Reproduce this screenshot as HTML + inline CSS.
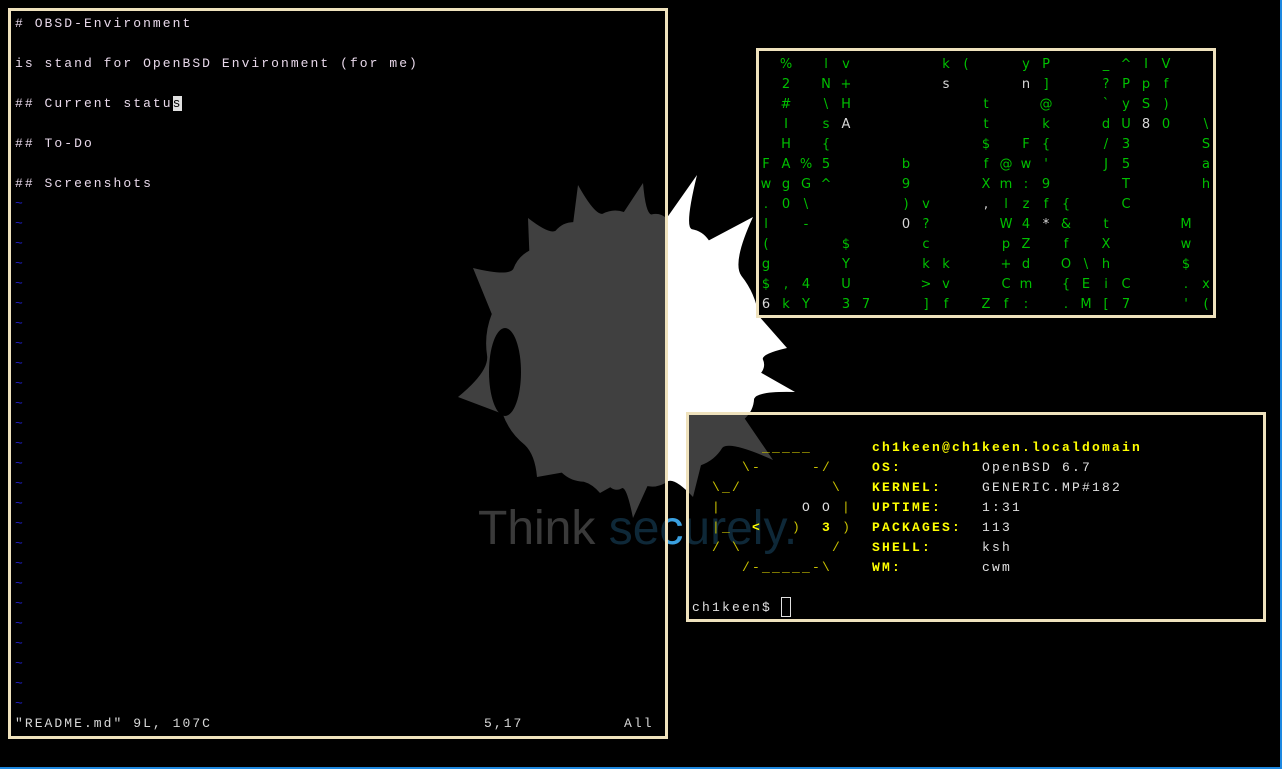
<!DOCTYPE html>
<html><head><meta charset="utf-8"><style>
*{margin:0;padding:0;box-sizing:border-box}
html,body{width:1282px;height:769px;overflow:hidden;background:#000}
body{position:relative;font-family:"Liberation Mono","DejaVu Sans Mono",monospace}
.win{position:absolute;border:3px solid #efe2bd;background:rgba(0,0,0,0.75)}
.t{position:absolute;white-space:pre;font-size:13px;letter-spacing:2.05px;line-height:20px}
#bg{position:absolute;left:0;top:0}
.m{position:absolute;color:#00c000;font-family:"DejaVu Sans",sans-serif;font-size:13px;width:20px;text-align:center;line-height:20px}
.w{color:#d8d8d8}
</style></head><body>
<svg id="bg" width="1282" height="769">
<path id="blob" fill="#fff" d=""/>
<ellipse cx="505" cy="372" rx="16" ry="44" fill="#000"/>
<text x="478" y="544" font-family="Liberation Sans,sans-serif" font-size="48" fill="#e8e8e8">Think <tspan fill="#3aa0e0">securely.</tspan></text>
<rect x="0" y="767" width="1282" height="2" fill="#1e88e0"/>
<rect x="1280" y="0" width="2" height="769" fill="#1e88e0"/>
</svg>
<script>
(function(){var cx=625,cy=350,R=138;
var tips=[[697,175],[753,217],[787,348],[795,392],[773,460],[693,497],[633,518],[600,493],[537,477],[458,397],[473,268],[528,218],[578,185],[643,183]];
var pts=tips.map(function(p){return {a:Math.atan2(p[1]-cy,p[0]-cx),p:p}}).sort(function(a,b){return a.a-b.a});
var d="";for(var i=0;i<pts.length;i++){var a=pts[i],b=pts[(i+1)%pts.length];var a1=a.a,a2=b.a;if(a2<a1)a2+=2*Math.PI;
d+=(i?"L":"M")+a.p[0]+" "+a.p[1];var m1=a1+(a2-a1)*0.3,m2=a1+(a2-a1)*0.7,mm=a1+(a2-a1)*0.5;
d+="Q"+(cx+R*Math.cos(a1+(a2-a1)*0.15))+" "+(cy+R*Math.sin(a1+(a2-a1)*0.15))+" "+(cx+R*Math.cos(m1))+" "+(cy+R*Math.sin(m1));
d+="Q"+(cx+R*1.03*Math.cos(mm))+" "+(cy+R*1.03*Math.sin(mm))+" "+(cx+R*Math.cos(m2))+" "+(cy+R*Math.sin(m2));}
d+="Z";document.getElementById("blob").setAttribute("d",d);})();
</script>

<div class="win" style="left:8px;top:8px;width:660px;height:731px;"></div>
<div class="t" style="left:15px;top:14px;color:#e8d8ea"># OBSD-Environment

is stand for OpenBSD Environment (for me)

## Current statu<span style="background:#e0e0e0;color:#000">s</span>

## To-Do

## Screenshots</div>
<div class="t" style="left:15px;top:194px;color:#2020d0;line-height:20px">~
~
~
~
~
~
~
~
~
~
~
~
~
~
~
~
~
~
~
~
~
~
~
~
~
~</div>
<div class="t" style="left:15px;top:714px;color:#d8d8d8">"README.md" 9L, 107C</div>
<div class="t" style="left:484px;top:714px;color:#d8d8d8">5,17</div>
<div class="t" style="left:624px;top:714px;color:#d8d8d8">All</div>

<div class="win" style="left:756px;top:48px;width:460px;height:270px;background:#000"></div>
<div id="mx"></div>
<script>
(function(){var rows=[
[[1,'%'],[3,'l'],[4,'v'],[9,'k'],[10,'('],[13,'y'],[14,'P'],[17,'_'],[18,'^'],[19,'I'],[20,'V']],
[[1,'2'],[3,'N'],[4,'+'],[9,'s',1],[13,'n',1],[14,']'],[17,'?'],[18,'P'],[19,'p'],[20,'f']],
[[1,'#'],[3,'\\'],[4,'H'],[11,'t'],[14,'@'],[17,'`'],[18,'y'],[19,'S'],[20,')']],
[[1,'I'],[3,'s'],[4,'A',1],[11,'t'],[14,'k'],[17,'d'],[18,'U'],[19,'8',1],[20,'0'],[22,'\\']],
[[1,'H'],[3,'{'],[11,'$'],[13,'F'],[14,'{'],[17,'/'],[18,'3'],[22,'S']],
[[0,'F'],[1,'A'],[2,'%'],[3,'5'],[7,'b'],[11,'f'],[12,'@'],[13,'w'],[14,"'"],[17,'J'],[18,'5'],[22,'a']],
[[0,'w'],[1,'g'],[2,'G'],[3,'^'],[7,'9'],[11,'X'],[12,'m'],[13,':'],[14,'9'],[18,'T'],[22,'h']],
[[0,'.'],[1,'0'],[2,'\\'],[7,')'],[8,'v'],[11,',',1],[12,'l'],[13,'z'],[14,'f'],[15,'{'],[18,'C']],
[[0,'l'],[2,'-'],[7,'0',1],[8,'?'],[12,'W'],[13,'4'],[14,'*',1],[15,'&'],[17,'t'],[21,'M']],
[[0,'('],[4,'$'],[8,'c'],[12,'p'],[13,'Z'],[15,'f'],[17,'X'],[21,'w']],
[[0,'g'],[4,'Y'],[8,'k'],[9,'k'],[12,'+'],[13,'d'],[15,'O'],[16,'\\'],[17,'h'],[21,'$']],
[[0,'$'],[1,','],[2,'4'],[4,'U'],[8,'>'],[9,'v'],[12,'C'],[13,'m'],[15,'{'],[16,'E'],[17,'i'],[18,'C'],[21,'.'],[22,'x']],
[[0,'6',1],[1,'k'],[2,'Y'],[4,'3'],[5,'7'],[8,']'],[9,'f'],[11,'Z'],[12,'f'],[13,':'],[15,'.'],[16,'M'],[17,'['],[18,'7'],[21,"'"],[22,'(']]];
var h="";rows.forEach(function(r,i){r.forEach(function(c){h+='<div class="m'+(c[2]?' w':'')+'" style="left:'+(756+20*c[0])+'px;top:'+(55+20*i)+'px">'+c[1].replace('&','&amp;').replace('<','&lt;').replace('>','&gt;')+'</div>';});});
document.getElementById('mx').innerHTML=h;})();
</script>

<div class="win" style="left:686px;top:412px;width:580px;height:210px;"></div>
<div class="t" style="left:692px;top:438px;color:#c8c000;letter-spacing:2.2px">       _____
     \-     -/
  \_/         \
  |        <span style="color:#e0e0e0">O O</span> |
  |_  <b style="color:#ffff00">&lt;</b>   )  <b style="color:#ffff00">3</b> )
  / \         /
     /-_____-\</div>
<div class="t" style="left:872px;top:438px;color:#ffff00;font-weight:bold;letter-spacing:2.2px">ch1keen@ch1keen.localdomain
OS:
KERNEL:
UPTIME:
PACKAGES:
SHELL:
WM:</div>
<div class="t" style="left:982px;top:458px;color:#e0e0e0;letter-spacing:2.2px">OpenBSD 6.7
GENERIC.MP#182
1:31
113
ksh
cwm</div>
<div class="t" style="left:692px;top:598px;color:#e0e0e0;letter-spacing:2.2px">ch1keen$</div>
<div style="position:absolute;left:781px;top:597px;width:10px;height:20px;border:1px solid #e0e0e0"></div>
</body></html>
